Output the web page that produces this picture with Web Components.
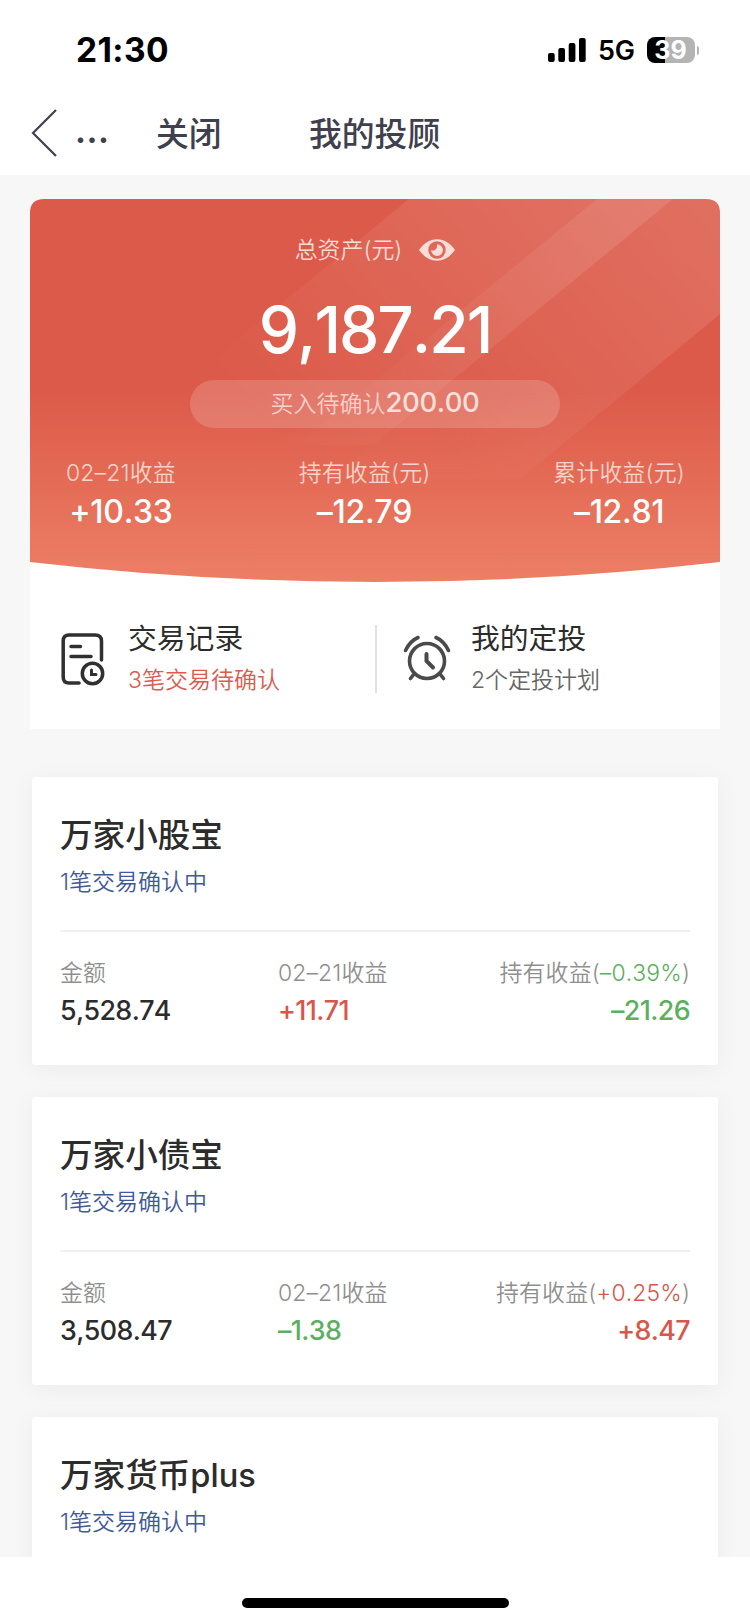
<!DOCTYPE html>
<html lang="zh-CN">
  <head>
    <meta charset="UTF-8" />
    <meta name="viewport" content="width=device-width, initial-scale=1.0" />
    <title>我的投顾</title>
    <style>
      body {
        margin: 0;
        background: #f7f7f7;
        color: #2c2c2c;
        font-family: Inter, 'Noto Sans CJK SC', sans-serif;
        font-kerning: none;
      }
    </style>
  </head>
  <body>
    <!-- phone frame: header, scrolling list, home indicator -->
    <template id="app-screen">
      <style>
        :host {
          display: flex;
          flex-direction: column;
          height: 1623px;
          overflow: hidden;
        }
        main {
          flex: 1;
          min-height: 0;
          overflow: hidden;
          padding: 24px 30px 0;
        }
        .list {
          display: flex;
          flex-direction: column;
          gap: 32px;
          margin: 48px 2px 0;
        }
        footer {
          height: 66px;
          flex: none;
          background: #fff;
          display: flex;
          justify-content: center;
          align-items: flex-start;
        }
        footer i {
          width: 267px;
          height: 10px;
          margin-top: 40.5px;
          border-radius: 5px;
          background: #000;
        }
      </style>
      <slot name="header"></slot>
      <main>
        <slot name="summary"></slot>
        <div class="list"><slot></slot></div>
      </main>
      <footer><i></i></footer>
    </template>

    <template id="status-bar">
      <style>
        :host {
          display: flex;
          align-items: center;
          height: 90px;
          padding: 10px 51px 0 76px;
          box-sizing: border-box;
          background: #fff;
          color: #000;
          flex: none;
        }
        .time {
          flex: 1;
          font-size: 33.5px;
          font-weight: 750;
          letter-spacing: 0.4px;
        }
        .signal {
          margin-right: 12px;
        }
        .net {
          font-size: 27px;
          font-weight: 600;
          letter-spacing: -0.4px;
          margin-right: 12px;
        }
        .battery {
          width: 48px;
          height: 26px;
          border-radius: 8px;
          background: linear-gradient(90deg, #000 38%, #b4b4b4 38%);
          color: #fff;
          font-size: 25px;
          line-height: 26px;
          font-weight: 700;
          text-align: center;
        }
        .nub {
          width: 2.5px;
          height: 9px;
          margin-left: 2px;
          border-radius: 0 3px 3px 0;
          background: #b4b4b4;
        }
      </style>
      <span class="time"><slot></slot></span>
      <svg class="signal" width="38" height="24" viewBox="0 0 38 24">
        <rect x="0" y="15" width="6.7" height="9" rx="2" />
        <rect x="10.3" y="10" width="6.7" height="14" rx="2" />
        <rect x="20.7" y="5" width="6.7" height="19" rx="2" />
        <rect x="31" y="0" width="6.7" height="24" rx="2" />
      </svg>
      <span class="net">5G</span>
      <span class="battery">39</span>
      <span class="nub"></span>
    </template>

    <template id="nav-bar">
      <style>
        :host {
          display: flex;
          align-items: center;
          height: 85px;
          padding-left: 31px;
          background: #fff;
          color: #403f4e;
          font-size: 32.8px;
          font-weight: 500;
          flex: none;
        }
        span {
          margin-top: -3px;
        }
        .more {
          width: 81px;
          margin-left: 18px;
          font-weight: 650;
          letter-spacing: 0.6px;
        }
        .close {
          width: 153px;
        }
      </style>
      <svg width="26" height="48" viewBox="0 0 26 48" fill="none" stroke="#403f4e" stroke-width="2.2">
        <path d="M25 1 2 24 25 47" />
      </svg>
      <span class="more">...</span>
      <span class="close">关闭</span>
      <span><slot></slot></span>
    </template>

    <template id="asset-summary">
      <style>
        :host {
          display: block;
          background: #fff;
          border-radius: 14px 14px 0 0;
          height: 530px;
        }
        .hero {
          display: grid;
          grid-template-rows: 383px;
          color: #fff;
        }
        .hero > * {
          grid-area: 1 / 1;
        }
        .content {
          display: flex;
          flex-direction: column;
          align-items: center;
        }
        .caption {
          display: flex;
          align-items: center;
          gap: 17px;
          height: 30px;
          margin-top: 36px;
          font-size: 22.9px;
          line-height: 28px;
          font-weight: 350;
          color: #fbdcd7;
        }
        .total {
          margin-top: 25px;
          font-size: 64px;
          line-height: 80px;
          font-weight: 450;
          letter-spacing: -2px;
        }
        .pending {
          width: 370px;
          height: 48px;
          margin-top: 9.5px;
          border-radius: 24px;
          background: rgba(255, 255, 255, 0.17);
          text-align: center;
          line-height: 45px;
          font-size: 23px;
          font-weight: 350;
          color: #f9d0c8;
        }
        .pending b {
          font-size: 27.5px;
          font-weight: 500;
          letter-spacing: -0.4px;
          color: #fbdfd9;
        }
        .figures {
          align-self: stretch;
          display: flex;
          justify-content: space-between;
          margin: 26px 35px 0 36px;
        }
        .links {
          display: flex;
          align-items: center;
          height: 68px;
          margin-top: 43px;
        }
        .links i {
          width: 2px;
          height: 68px;
          background: #e2e2e2;
        }
      </style>
      <div class="hero">
        <svg width="690" height="383" viewBox="0 0 690 383">
          <defs>
            <linearGradient id="base" x1="0" y1="0" x2="0" y2="1">
              <stop offset="0.5" stop-color="#dc5a49" />
              <stop offset="1" stop-color="#ed7f66" />
            </linearGradient>
            <linearGradient id="wide" gradientUnits="userSpaceOnUse" x1="560" y1="0" x2="260" y2="260">
              <stop offset="0" stop-color="#fff" stop-opacity="0.13" />
              <stop offset="1" stop-color="#fff" stop-opacity="0" />
            </linearGradient>
            <linearGradient id="side" gradientUnits="userSpaceOnUse" x1="690" y1="20" x2="420" y2="250">
              <stop offset="0" stop-color="#fff" stop-opacity="0.13" />
              <stop offset="1" stop-color="#fff" stop-opacity="0.01" />
            </linearGradient>
            <linearGradient id="beam" gradientUnits="userSpaceOnUse" x1="610" y1="0" x2="350" y2="230">
              <stop offset="0" stop-color="#fff" stop-opacity="0.09" />
              <stop offset="1" stop-color="#fff" stop-opacity="0.01" />
            </linearGradient>
            <clipPath id="shape">
              <path d="M0 14Q0 0 14 0H676Q690 0 690 14V363Q345 403 0 363Z" />
            </clipPath>
          </defs>
          <g clip-path="url(#shape)">
            <rect width="690" height="383" fill="url(#base)" />
            <path d="M379 0H643L343 246H79Z" fill="url(#wide)" />
            <path d="M643 0H690V115L540 239 490 280H301Z" fill="url(#side)" />
            <path d="M567 0H643L343 246H267Z" fill="url(#beam)" />
          </g>
        </svg>
        <div class="content">
          <div class="caption">
            <span>总资产(元)</span>
            <svg width="36" height="22" viewBox="0 0 36 22">
              <path
                fill="#fbdcd7"
                fill-rule="evenodd"
                d="M0 11C5 4 11 .3 18 .3S31 4 36 11C31 18 25 21.7 18 21.7S5 18 0 11ZM18 2.3A8.7 8.7 0 1 0 18 19.7 8.7 8.7 0 1 0 18 2.3Z"
              />
              <path fill="#fbdcd7" d="M18 5.2A5.9 5.9 0 1 1 12.2 11Q14.500 12.500 16.500 10.500T18 5.2Z" />
            </svg>
          </div>
          <div class="total">9,187.21</div>
          <div class="pending">买入待确认<b>200.00</b></div>
          <div class="figures"><slot></slot></div>
        </div>
      </div>
      <div class="links">
        <slot name="left"></slot>
        <i></i>
        <slot name="right"></slot>
      </div>
    </template>

    <template id="hero-figure">
      <style>
        :host {
          display: flex;
          flex-direction: column;
          align-items: center;
          color: #fff;
        }
        .label {
          font-size: 22.9px;
          line-height: 38px;
          font-weight: 350;
          letter-spacing: 0.2px;
          color: #fad3cb;
        }
        .value {
          font-size: 32px;
          line-height: 40px;
          font-weight: 450;
          letter-spacing: -0.3px;
        }
      </style>
      <span class="label"><slot name="label"></slot></span>
      <span class="value"><slot></slot></span>
    </template>

    <template id="quick-link">
      <style>
        :host {
          display: flex;
          align-items: center;
          box-sizing: border-box;
        }
        .text {
          display: flex;
          flex-direction: column;
          margin-top: -1px;
        }
        .title {
          font-size: 28.8px;
          line-height: 42px;
          color: #2c2c2c;
        }
        .note {
          font-size: 23px;
          line-height: 40px;
          font-weight: 350;
          color: var(--note-color, #666);
        }
      </style>
      <slot name="icon"></slot>
      <div class="text">
        <span class="title"><slot></slot></span>
        <span class="note"><slot name="note"></slot></span>
      </div>
    </template>

    <template id="fund-card">
      <style>
        :host {
          display: block;
          flex: none;
          box-sizing: border-box;
          height: 288px;
          padding: 34px 28px 0;
          background: #fff;
          border-radius: 4px;
          box-shadow: 0 4px 24px rgba(0, 0, 0, 0.05);
        }
        .name {
          font-size: 32.6px;
          line-height: 48px;
          font-weight: 500;
        }
        .status {
          font-size: 23px;
          line-height: 47px;
          font-weight: 350;
          color: #3f5a96;
        }
        .metrics {
          display: flex;
          margin-top: 24px;
          padding-top: 22px;
          border-top: 2px solid #f0f0f0;
        }
      </style>
      <div class="name"><slot name="name"></slot></div>
      <div class="status"><slot name="status"></slot></div>
      <div class="metrics"><slot></slot></div>
    </template>

    <template id="fund-metric">
      <style>
        :host {
          display: flex;
          flex-direction: column;
          width: 218px;
        }
        :host([end]) {
          width: auto;
          flex: 1;
          align-items: flex-end;
        }
        .label {
          font-size: 22.9px;
          line-height: 38px;
          font-weight: 350;
          letter-spacing: 0.15px;
          color: #8f8f8f;
        }
        .value {
          font-size: 26.8px;
          line-height: 36px;
          font-weight: 450;
          letter-spacing: -0.6px;
          color: var(--tone, #2c2c2c);
        }
        ::slotted([slot='rate']) {
          color: var(--tone);
        }
      </style>
      <span class="label"><slot name="label"></slot><slot name="rate"></slot><slot name="tail"></slot></span>
      <span class="value"><slot></slot></span>
    </template>

    <style>
      .up {
        --tone: #d9564a;
      }
      .down {
        --tone: #5bb060;
      }
      .records {
        --note-color: #dc5a4e;
        width: 345px;
        padding-left: 31px;
      }
      .records svg {
        margin-right: 23px;
      }
      .plan {
        padding-left: 26px;
      }
      .plan svg {
        margin-right: 20px;
      }
    </style>

    <app-screen>
      <status-bar slot="header">21:30</status-bar>
      <nav-bar slot="header">我的投顾</nav-bar>

      <asset-summary slot="summary">
        <hero-figure><span slot="label">02–21收益</span>+10.33</hero-figure>
        <hero-figure><span slot="label">持有收益(元)</span>–12.79</hero-figure>
        <hero-figure><span slot="label">累计收益(元)</span>–12.81</hero-figure>

        <quick-link slot="left" class="records">
          <svg slot="icon" width="44" height="54" viewBox="0 0 44 54" fill="none" stroke="#303030" stroke-width="3.5" stroke-linecap="round">
            <path d="M18 51H8Q2.2 51 2.2 45V9Q2.2 3 8 3H34Q40.5 3 40.5 9V28" />
            <path d="M10 14.5H19.5M10 24.5H30" />
            <circle cx="31.5" cy="41.5" r="10.2" />
            <path d="M30.5 38V42.500H35" stroke-width="3" />
          </svg>
          交易记录
          <span slot="note">3笔交易待确认</span>
        </quick-link>
        <quick-link slot="right" class="plan">
          <svg slot="icon" width="48" height="48" viewBox="0 0 48 48" fill="none" stroke="#4a4a4a" stroke-width="3.6" stroke-linecap="round">
            <circle cx="24" cy="26" r="17.5" />
            <path d="M23.5 19V26L30 32.5" stroke-width="4" />
            <path d="M2.5 15.5Q7 6 15 2.5M33 2.500Q41 6 45.500 15.500" />
            <path d="M11 39 7.5 43.5M37 39 40.5 43.5" />
          </svg>
          我的定投
          <span slot="note">2个定投计划</span>
        </quick-link>
      </asset-summary>

      <fund-card>
        <span slot="name">万家小股宝</span>
        <span slot="status">1笔交易确认中</span>
        <fund-metric><span slot="label">金额</span>5,528.74</fund-metric>
        <fund-metric class="up"><span slot="label">02–21收益</span>+11.71</fund-metric>
        <fund-metric class="down" end>
          <span slot="label">持有收益(</span><span slot="rate">–0.39%</span><span slot="tail">)</span>–21.26
        </fund-metric>
      </fund-card>

      <fund-card>
        <span slot="name">万家小债宝</span>
        <span slot="status">1笔交易确认中</span>
        <fund-metric><span slot="label">金额</span>3,508.47</fund-metric>
        <fund-metric class="down"><span slot="label">02–21收益</span>–1.38</fund-metric>
        <fund-metric class="up" end>
          <span slot="label">持有收益(</span><span slot="rate">+0.25%</span><span slot="tail">)</span>+8.47
        </fund-metric>
      </fund-card>

      <fund-card>
        <span slot="name">万家货币plus</span>
        <span slot="status">1笔交易确认中</span>
      </fund-card>
    </app-screen>
  </body>
  <script>
    // every element is a plain shell around the template with the same id
    const tags = [
      'app-screen',
      'status-bar',
      'nav-bar',
      'asset-summary',
      'hero-figure',
      'quick-link',
      'fund-card',
      'fund-metric'
    ]

    tags.forEach(tag => {
      customElements.define(
        tag,
        class extends HTMLElement {
          constructor() {
            super()
            const template = document.getElementById(tag)
            const shadowRoot = this.attachShadow({ mode: 'open' })
            shadowRoot.appendChild(template.content.cloneNode(true))
          }
        }
      )
    })
  </script>
</html>
